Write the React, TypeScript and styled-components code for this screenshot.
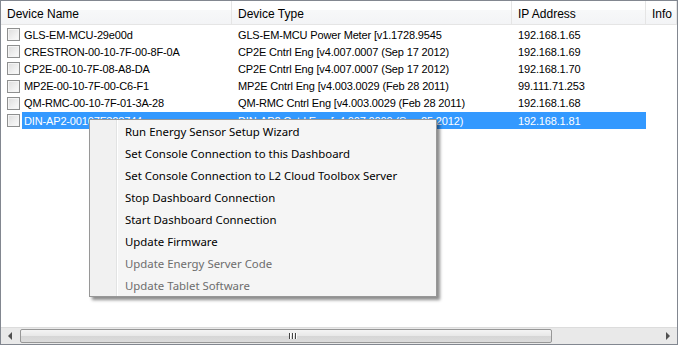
import React from "react";
import styled, { createGlobalStyle } from "styled-components";

const Global = createGlobalStyle`
  html, body { margin: 0; padding: 0; background: #ffffff; }
  * { box-sizing: border-box; }
`;

const Frame = styled.div`
  position: relative;
  width: 678px;
  height: 345px;
  border: 1px solid #828790;
  background: #ffffff;
  display: flex;
  flex-direction: column;
  font-family: "Liberation Sans", Arial, sans-serif;
  font-size: 11px;
  color: #000;
  overflow: hidden;
`;

const Header = styled.div`
  display: grid;
  grid-template-columns: 231px 280px 134px 1fr;
  height: 24px;
  background: linear-gradient(#ffffff 0%, #ffffff 40%, #f7f8f9 41%, #f3f4f6 100%);
  border-bottom: 1px solid #e5e5e5;
`;

const HeaderCell = styled.div<{ $pad: number }>`
  display: flex;
  align-items: center;
  padding-left: ${(p) => p.$pad}px;
  padding-top: 3px;
  border-right: 1px solid #e5e5e5;
  font-size: 12px;
  white-space: nowrap;
  overflow: hidden;
`;

const Body = styled.div`
  flex: 1;
  padding-top: 1px;
`;

const Row = styled.div`
  display: grid;
  grid-template-columns: 231px 280px 134px 1fr;
  height: 17.2px;
  align-items: center;
`;

const NameCell = styled.div`
  display: flex;
  align-items: center;
  height: 17px;
  padding-left: 6px;
`;

const Check = styled.span`
  width: 13px;
  height: 13px;
  border: 1px solid #8e8f8f;
  background: linear-gradient(135deg, #dcdcdc 0%, #f0f0f0 60%, #fbfbfb 100%);
  box-shadow: inset 0 0 0 1px #f4f4f4;
  flex: none;
`;

const Text = styled.span<{ $sel?: boolean }>`
  display: flex;
  align-items: center;
  height: 17px;
  padding-left: 3px;
  white-space: nowrap;
  overflow: hidden;
  font-size: 11px;
  letter-spacing: -0.15px;
  color: ${(p) => (p.$sel ? "#ffffff" : "#000000")};
  background: ${(p) => (p.$sel ? "#3399ff" : "transparent")};
`;

const NameText = styled(Text)`
  flex: 1;
  margin-left: 2px;
  padding-left: 2px;
`;

const Cell = styled(Text)`
  padding-left: 6px;
`;

const Menu = styled.div`
  position: absolute;
  left: 88px;
  top: 118px;
  width: 348px;
  border: 1px solid #979797;
  background: #f0f0f0;
  box-shadow: 3px 3px 3px rgba(0, 0, 0, 0.45);
  font-family: "Noto Sans", "Open Sans", sans-serif;
  font-size: 11.4px;
`;

const MenuInner = styled.div`
  background: linear-gradient(
    to right,
    #f1f1f1 0px,
    #f1f1f1 26px,
    #e2e3e3 26px,
    #e2e3e3 27px,
    #ffffff 27px,
    #ffffff 28px,
    #f5f5f5 28px
  );
`;

const MenuItem = styled.div<{ $disabled?: boolean }>`
  height: 22px;
  display: flex;
  align-items: center;
  padding-left: 35px;
  color: ${(p) => (p.$disabled ? "#6d6d6d" : "#000000")};
  white-space: nowrap;
`;

const ScrollBar = styled.div`
  height: 17px;
  display: flex;
  background: #e9e9e9;
  border-top: 1px solid #dcdcdc;
`;

const Arrow = styled.div`
  width: 19px;
  display: flex;
  align-items: center;
  justify-content: center;
  flex: none;
`;

const Track = styled.div`
  flex: 1;
`;

const Thumb = styled.div`
  width: 532px;
  margin: 1px 0;
  border: 1px solid #979797;
  border-radius: 2px;
  background: linear-gradient(#f4f4f4 0%, #e8e8e8 50%, #d6d6d6 51%, #dcdcdc 100%);
  display: flex;
  align-items: center;
  justify-content: center;
  flex: none;
`;

const Grip = styled.div`
  display: flex;
  gap: 1px;
  margin-left: 14px;
  span {
    width: 1px;
    height: 6px;
    background: #444;
    box-shadow: 1px 0 0 #fff;
    margin-right: 1px;
  }
`;

const rows = [
  ["GLS-EM-MCU-29e00d", "GLS-EM-MCU Power Meter [v1.1728.9545", "192.168.1.65"],
  ["CRESTRON-00-10-7F-00-8F-0A", "CP2E Cntrl Eng [v4.007.0007 (Sep 17 2012)", "192.168.1.69"],
  ["CP2E-00-10-7F-08-A8-DA", "CP2E Cntrl Eng [v4.007.0007 (Sep 17 2012)", "192.168.1.70"],
  ["MP2E-00-10-7F-00-C6-F1", "MP2E Cntrl Eng [v4.003.0029 (Feb 28 2011)", "99.111.71.253"],
  ["QM-RMC-00-10-7F-01-3A-28", "QM-RMC Cntrl Eng [v4.003.0029 (Feb 28 2011)", "192.168.1.68"],
  ["DIN-AP2-00107F328744", "DIN-AP2 Cntrl Eng [v4.007.0009 (Sep 25 2012)", "192.168.1.81"],
];

const menuItems: [string, boolean][] = [
  ["Run Energy Sensor Setup Wizard", false],
  ["Set Console Connection to this Dashboard", false],
  ["Set Console Connection to L2 Cloud Toolbox Server", false],
  ["Stop Dashboard Connection", false],
  ["Start Dashboard Connection", false],
  ["Update Firmware", false],
  ["Update Energy Server Code", true],
  ["Update Tablet Software", true],
];

export default function App() {
  return (
    <>
      <Global />
      <Frame>
        <Header>
          <HeaderCell $pad={6}>Device Name</HeaderCell>
          <HeaderCell $pad={6}>Device Type</HeaderCell>
          <HeaderCell $pad={6}>IP Address</HeaderCell>
          <HeaderCell $pad={6}>Info</HeaderCell>
        </Header>
        <Body>
          {rows.map((r, i) => {
            const sel = i === rows.length - 1;
            return (
              <Row key={i}>
                <NameCell>
                  <Check />
                  <NameText $sel={sel}>{r[0]}</NameText>
                </NameCell>
                <Cell $sel={sel}>{r[1]}</Cell>
                <Cell $sel={sel}>{r[2]}</Cell>
                <span />
              </Row>
            );
          })}
        </Body>
        <ScrollBar>
          <Arrow>
            <svg width="5" height="8" viewBox="0 0 5 8">
              <path d="M4 0 L0 4 L4 8 Z" fill="#505050" />
            </svg>
          </Arrow>
          <Thumb>
            <Grip>
              <span />
              <span />
              <span />
            </Grip>
          </Thumb>
          <Track />
          <Arrow>
            <svg width="5" height="8" viewBox="0 0 5 8">
              <path d="M1 0 L5 4 L1 8 Z" fill="#505050" />
            </svg>
          </Arrow>
        </ScrollBar>
        <Menu>
          <MenuInner>
            {menuItems.map(([t, d]) => (
              <MenuItem key={t} $disabled={d}>
                {t}
              </MenuItem>
            ))}
          </MenuInner>
        </Menu>
      </Frame>
    </>
  );
}
